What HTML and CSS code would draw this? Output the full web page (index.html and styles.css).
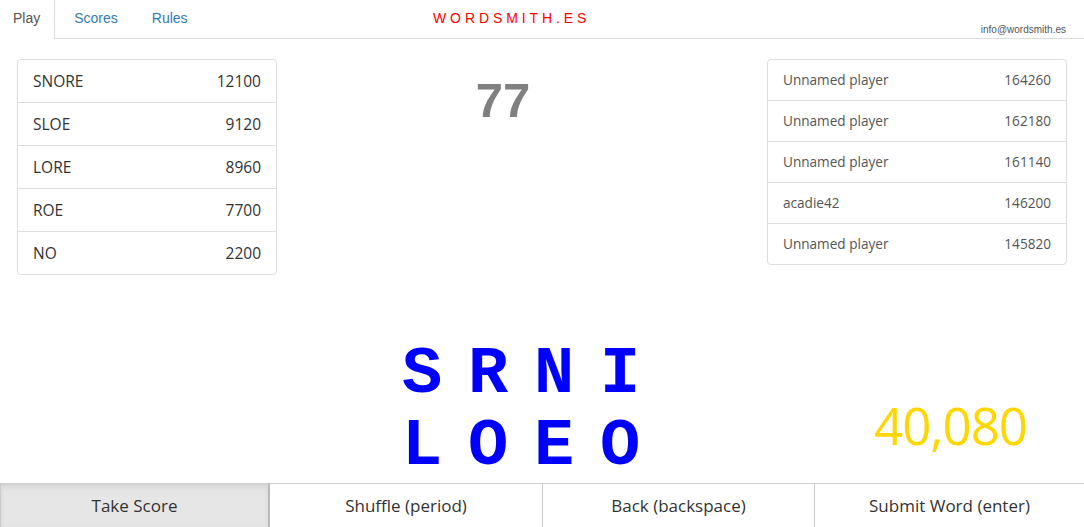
FILE: index.html
```html
<!DOCTYPE html>
<html>
<head>
<meta charset="utf-8">
<link rel="stylesheet" href="styles.css">
</head>
<body>
<div class="page">
  <header class="nav">
    <ul class="tabs">
      <li class="tab active">Play</li>
      <li class="tab">Scores</li>
      <li class="tab">Rules</li>
    </ul>
    <div class="brand">WORDSMITH.ES</div>
    <div class="email">info@wordsmith.es</div>
  </header>

  <main class="main">
    <section class="top">
      <div class="list words">
        <div class="row"><span>SNORE</span><span>12100</span></div>
        <div class="row"><span>SLOE</span><span>9120</span></div>
        <div class="row"><span>LORE</span><span>8960</span></div>
        <div class="row"><span>ROE</span><span>7700</span></div>
        <div class="row"><span>NO</span><span>2200</span></div>
      </div>
      <div class="timer">77</div>
      <div class="list leaders">
        <div class="row"><span>Unnamed player</span><span>164260</span></div>
        <div class="row"><span>Unnamed player</span><span>162180</span></div>
        <div class="row"><span>Unnamed player</span><span>161140</span></div>
        <div class="row"><span>acadie42</span><span>146200</span></div>
        <div class="row"><span>Unnamed player</span><span>145820</span></div>
      </div>
    </section>

    <section class="board">
      <div class="letters">
        <span>S</span><span>R</span><span>N</span><span>I</span>
        <span>L</span><span>O</span><span>E</span><span>O</span>
      </div>
      <div class="score">40,080</div>
    </section>
  </main>

  <footer class="buttons">
    <button class="btn pressed">Take Score</button>
    <button class="btn">Shuffle (period)</button>
    <button class="btn">Back (backspace)</button>
    <button class="btn">Submit Word (enter)</button>
  </footer>
</div>
</body>
</html>
```

FILE: styles.css
```css
* { box-sizing: border-box; }
html, body { margin: 0; padding: 0; background: #fff; }
body {
  font-family: "Open Sans", "Noto Sans", sans-serif;
  color: #333;
  width: 1084px;
  height: 527px;
  overflow: hidden;
}
.page {
  display: flex;
  flex-direction: column;
  height: 527px;
}
.nav {
  position: relative;
  height: 39px;
  border-bottom: 1px solid #ddd;
  display: flex;
  align-items: stretch;
}
.tabs {
  list-style: none;
  margin: 0;
  padding: 0;
  display: flex;
  font-family: "Liberation Sans", Arial, sans-serif;
  font-size: 14px;
}
.tab {
  padding: 0 13px;
  line-height: 37px;
  color: #337ab7;
  margin-right: 8px;
}
.tab.active {
  color: #555;
  border-right: 1px solid #ddd;
  background: #fff;
  height: 39px;
  margin-right: 6px;
  padding-right: 14px;
}
.brand {
  position: absolute;
  left: 433px;
  top: 10px;
  font-family: "Liberation Sans", Arial, sans-serif;
  font-size: 14px;
  letter-spacing: 3.9px;
  color: #f00;
}
.email {
  position: absolute;
  right: 18px;
  top: 24px;
  font-family: "Liberation Sans", Arial, sans-serif;
  font-size: 10px;
  color: #555;
}
.main {
  flex: 1;
  display: flex;
  flex-direction: column;
  justify-content: space-between;
}
.top {
  display: flex;
  justify-content: space-between;
  padding: 20px 17px 0 17px;
}
.list {
  border: 1px solid #ddd;
  border-radius: 4px;
  align-self: flex-start;
}
.row {
  display: flex;
  justify-content: space-between;
  align-items: center;
  padding: 0 15px;
  border-top: 1px solid #ddd;
}
.row:first-child { border-top: none; }
.words { width: 260px; }
.words .row { height: 43px; font-size: 15.5px; color: #333; }
.words .row:first-child { height: 42px; }
.leaders { width: 300px; }
.leaders .row { height: 41px; font-size: 13.6px; color: #555; padding-bottom: 2px; }
.leaders .row:first-child { height: 40px; }
.timer {
  font-family: "Liberation Sans", Arial, sans-serif;
  font-weight: bold;
  font-size: 49px;
  color: #808080;
  margin-right: 38px;
  padding-top: 11px;
  line-height: 60px;
}
.board {
  position: relative;
  display: flex;
  justify-content: center;
  padding-bottom: 1px;
}
.letters {
  display: grid;
  grid-template-columns: repeat(4, 66px);
  grid-auto-rows: 72px;
  font-family: "Liberation Mono", "DejaVu Sans Mono", monospace;
  font-weight: bold;
  font-size: 67px;
  line-height: 72px;
  color: #00f;
  margin-right: 42px;
}
.letters span { text-align: center; }
.score {
  position: absolute;
  left: 874px;
  top: 52px;
  font-family: "Open Sans", sans-serif;
  font-size: 51px;
  color: #ffd700;
  letter-spacing: -1px;
}
.buttons {
  display: grid;
  grid-template-columns: 270px 273px 272px 269px;
  height: 44px;
}
.btn {
  font-family: "Open Sans", "Noto Sans", sans-serif;
  font-size: 17px;
  color: #333;
  background: #fff;
  border: 1px solid #ccc;
  border-left: none;
  border-bottom: none;
  padding: 0;
  margin: 0;
}
.btn:first-child { border-left: 1px solid #ccc; }
.btn:last-child { border-right: none; }
.btn.pressed {
  background: #e6e6e6;
  border-right: 2px solid #bbb;
  box-shadow: inset 0 3px 5px rgba(0,0,0,.08);
}
```
